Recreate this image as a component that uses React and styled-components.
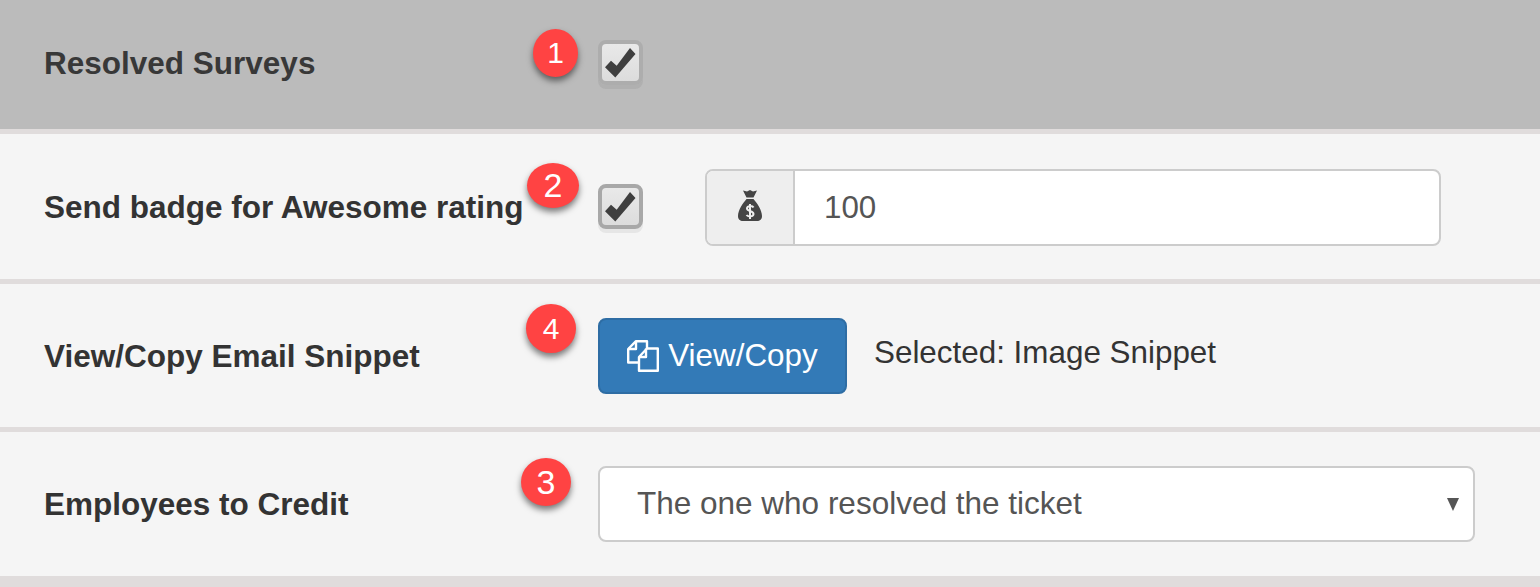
import React from 'react';
import styled, { createGlobalStyle } from 'styled-components';

const GlobalStyle = createGlobalStyle`
  html, body {
    margin: 0;
    padding: 0;
    background: #e0dcdc;
    font-family: "Liberation Sans", Arial, sans-serif;
  }
`;

const Page = styled.div`
  width: 1540px;
  height: 587px;
  overflow: hidden;
  background: #e0dcdc;
`;

const Row = styled.div`
  position: relative;
  height: ${({ $height }) => $height}px;
  margin-bottom: 5px;
  padding-left: 44px;
  display: flex;
  align-items: center;
  box-sizing: border-box;
  background: ${({ $dim }) => ($dim ? '#bbbbbb' : '#f5f5f5')};
`;

const Label = styled.div`
  width: 554px;
  flex: none;
  font-size: 31.5px;
  font-weight: bold;
  margin-top: ${({ $shift }) => $shift || 0}px;
  color: ${({ $dim }) => ($dim ? '#383838' : '#333333')};
`;

const Badge = styled.div`
  position: absolute;
  left: ${({ $left }) => $left}px;
  top: ${({ $top }) => $top}px;
  width: ${({ $w }) => $w}px;
  height: ${({ $h }) => $h}px;
  border-radius: 50%;
  background: #ff4343;
  color: #fff;
  font-size: ${({ $size }) => $size}px;
  display: flex;
  align-items: center;
  justify-content: center;
  box-shadow: 0 4px 6px rgba(0, 0, 0, 0.5);
`;

const CheckBox = styled.div`
  width: 45px;
  height: 45px;
  flex: none;
  box-sizing: border-box;
  border-radius: 8px;
  border: 4px solid ${({ $dim }) => ($dim ? '#adadad' : '#a8a8a8')};
  background: linear-gradient(#e9e9e9, #dcdcdc);
  box-shadow: 0 4px 0 ${({ $dim }) => ($dim ? '#b0b0b0' : '#e6e6e6')};
  display: flex;
  align-items: center;
  justify-content: center;
  margin-top: ${({ $shift }) => $shift}px;
`;

const InputGroup = styled.div`
  margin-left: 62px;
  margin-top: 2px;
  width: 736px;
  height: 77px;
  box-sizing: border-box;
  display: flex;
  border: 2px solid #cccccc;
  border-radius: 8px;
  overflow: hidden;
  background: #fff;
`;

const Addon = styled.div`
  width: 88px;
  flex: none;
  box-sizing: border-box;
  padding-bottom: 5px;
  background: #eeeeee;
  border-right: 2px solid #cccccc;
  display: flex;
  align-items: center;
  justify-content: center;
`;

const InputValue = styled.div`
  padding-left: 29px;
  font-size: 31.3px;
  line-height: 73px;
  color: #555555;
`;

const Button = styled.div`
  width: 249px;
  height: 76px;
  box-sizing: border-box;
  border: 2px solid #2e6da4;
  border-radius: 8px;
  background: #337ab7;
  color: #fff;
  font-size: 31.4px;
  display: flex;
  align-items: center;
  justify-content: center;
  gap: 9px;
`;

const Hint = styled.div`
  margin-left: 27px;
  margin-top: -5px;
  font-size: 31.4px;
  color: #333333;
`;

const Select = styled.div`
  position: relative;
  width: 877px;
  height: 76px;
  box-sizing: border-box;
  border: 2px solid #cccccc;
  border-radius: 8px;
  background: #fff;
  padding-left: 37px;
  font-size: 31.5px;
  line-height: 71px;
  color: #555555;
`;

const Caret = styled.span`
  position: absolute;
  right: 14px;
  top: 30px;
  width: 0;
  height: 0;
  border-left: 6.5px solid transparent;
  border-right: 6.5px solid transparent;
  border-top: 13px solid #555555;
`;

const CheckMark = () => (
  <svg width="31" height="30" viewBox="0 0 31 30">
    <path d="M0 19.3 L6 12.7 L11.7 17.7 L25 0 L30.5 6 L10.3 29.5 Z" fill="#3f3f3f" />
  </svg>
);

const MoneyBag = () => (
  <svg width="24" height="32" viewBox="0 0 24 32">
    <path
      d="M5 1.5 L9 2.5 L12 1 L15 2.5 L19 1.5 L15.5 8.5 L8.5 8.5 Z M8.5 10 L15.5 10 C19 14 24 21 24 27 C24 30.5 22 32 19 32 L5 32 C2 32 0 30.5 0 27 C0 21 5 14 8.5 10 Z"
      fill="#454545"
    />
    <path
      d="M15.5 18.5 C14.5 16.5 9 16.5 9 19.5 C9 22.5 15.5 21.5 15.5 25 C15.5 28 10 28 8.5 26 M12 15 L12 30"
      fill="none"
      stroke="#eeeeee"
      strokeWidth="2"
    />
  </svg>
);

const CopyIcon = () => (
  <svg width="32" height="32" viewBox="0 0 32 32" fill="none" stroke="#fff" strokeWidth="2.4" strokeLinejoin="round">
    <path d="M12 22.5 L1.2 22.5 L1.2 9 L9 1.2 L20 1.2 L20 8" />
    <path d="M9 1.2 L9 9 L1.2 9" />
    <path d="M12 30.8 L12 17 L20 8.5 L30.8 8.5 L30.8 30.8 Z" />
    <path d="M19 8.5 L19 17 L12 17" />
  </svg>
);

const App = () => (
  <Page>
    <GlobalStyle />
    <Row $dim $height={129}>
      <Label $dim $shift={-3}>Resolved Surveys</Label>
      <CheckBox $dim $shift={-4}>
        <CheckMark />
      </CheckBox>
      <Badge $left={533} $top={29} $w={45} $h={48} $size={30}>1</Badge>
    </Row>
    <Row $height={145}>
      <Label $shift={1}>Send badge for Awesome rating</Label>
      <CheckBox $shift={0}>
        <CheckMark />
      </CheckBox>
      <InputGroup>
        <Addon>
          <MoneyBag />
        </Addon>
        <InputValue>100</InputValue>
      </InputGroup>
      <Badge $left={527} $top={29} $w={52} $h={45} $size={34}>2</Badge>
    </Row>
    <Row $height={143}>
      <Label $shift={1}>View/Copy Email Snippet</Label>
      <Button>
        <CopyIcon />
        View/Copy
      </Button>
      <Hint>Selected: Image Snippet</Hint>
      <Badge $left={526} $top={20} $w={50} $h={49} $size={30}>4</Badge>
    </Row>
    <Row $height={144}>
      <Label>Employees to Credit</Label>
      <Select>
        The one who resolved the ticket
        <Caret />
      </Select>
      <Badge $left={521} $top={26} $w={50} $h={48} $size={34}>3</Badge>
    </Row>
  </Page>
);

export default App;
